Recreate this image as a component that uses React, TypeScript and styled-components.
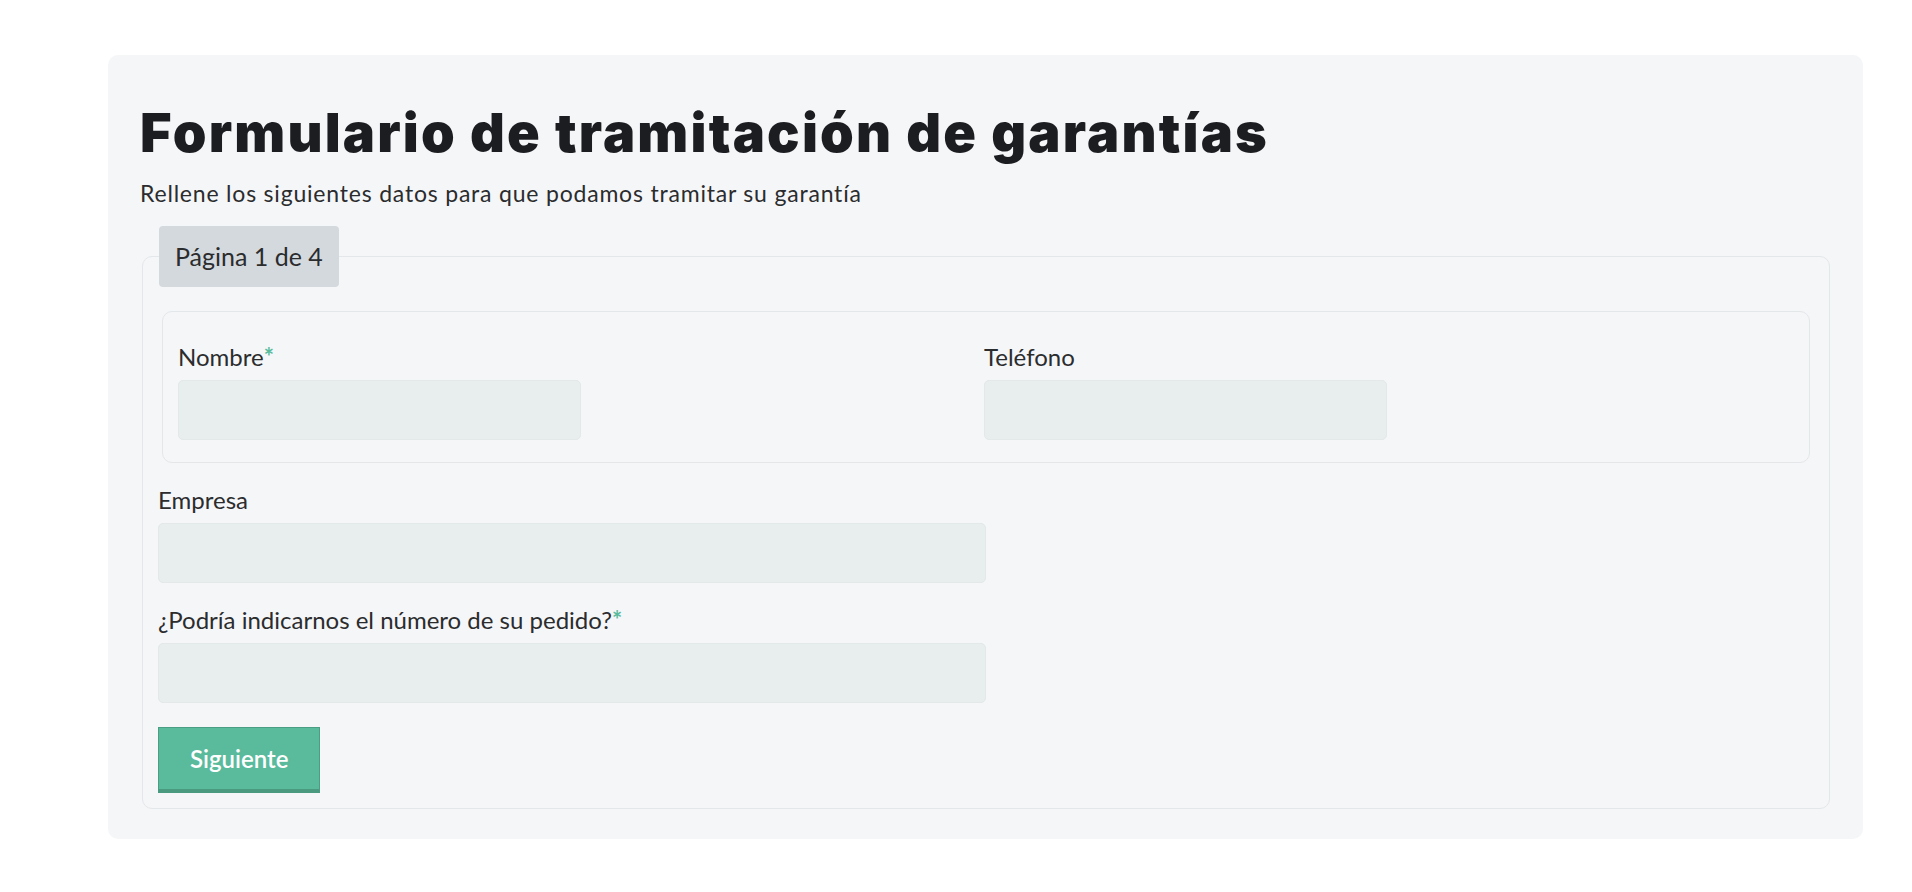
import React from "react";
import styled, { createGlobalStyle } from "styled-components";

const GlobalStyle = createGlobalStyle`
  body {
    margin: 0;
    background: #ffffff;
    font-family: Lato, "Noto Sans", sans-serif;
    color: #2b2c2e;
  }
  * {
    box-sizing: border-box;
  }
`;

const Page = styled.main`
  padding: 55px 49px 55px 108px;
`;

const Card = styled.section`
  background: #f5f6f8;
  border-radius: 10px;
  padding: 45px 31px 30px 32px;
`;

const Title = styled.h1`
  margin: 0;
  font-family: Inter, "Noto Sans", sans-serif;
  font-weight: 900;
  font-size: 54px;
  line-height: 65px;
  letter-spacing: 2.2px;
  color: #1c1d21;
`;

const Subtitle = styled.p`
  margin: 13px 0 17px;
  font-size: 23px;
  line-height: 31px;
  letter-spacing: 0.8px;
`;

const Fieldset = styled.fieldset`
  margin: 0 2px;
  padding: 24px 15px 15px;
  border: 1px solid #e4e7ea;
  border-radius: 10px;
`;

const Legend = styled.legend`
  margin-left: 1px;
  padding: 0 16px;
  height: 61px;
  line-height: 61px;
  font-size: 25px;
  background: #d4d9dd;
  border-radius: 4px;
  color: #2b2c2e;
`;

const Group = styled.div`
  display: grid;
  grid-template-columns: 1fr 1fr;
  margin: 0 4px;
  padding: 27px 19px 22px 15px;
  border: 1px solid #e4e7ea;
  border-radius: 10px;
`;

const Field = styled.div<{ $spaced?: boolean }>`
  display: flex;
  flex-direction: column;
  align-items: flex-start;
  margin-top: ${(p) => (p.$spaced ? "19px" : "0")};
`;

const Label = styled.label`
  font-size: 24px;
  line-height: 36px;
  color: #2b2c2e;
`;

const Required = styled.span`
  color: #58bb9c;
  font-weight: 700;
`;

const Input = styled.input`
  margin-top: 5px;
  width: 50%;
  height: 60px;
  background: #e8eded;
  border: 1px solid #e3e8e8;
  border-radius: 5px;
  font-size: 22px;
  padding: 0 14px;
  outline: none;
`;

const Button = styled.button`
  margin-top: 24px;
  height: 66px;
  padding: 0 31px;
  background: #5aba9c;
  border: 1px solid #4a9e84;
  border-bottom: 4px solid #4a9a80;
  border-radius: 0;
  color: #ffffff;
  font-family: Lato, "Noto Sans", sans-serif;
  font-weight: 600;
  font-size: 24px;
  cursor: pointer;
`;

function FormField({
  label,
  required,
  spaced,
}: {
  label: string;
  required?: boolean;
  spaced?: boolean;
}) {
  return (
    <Field $spaced={spaced}>
      <Label>
        {label}
        {required ? <Required>*</Required> : null}
      </Label>
      <Input type="text" />
    </Field>
  );
}

export default function App() {
  return (
    <Page>
      <GlobalStyle />
      <Card>
        <Title>Formulario de tramitación de garantías</Title>
        <Subtitle>
          Rellene los siguientes datos para que podamos tramitar su garantía
        </Subtitle>
        <Fieldset>
          <Legend>Página 1 de 4</Legend>
          <Group>
            <FormField label="Nombre" required />
            <FormField label="Teléfono" />
          </Group>
          <FormField label="Empresa" spaced />
          <FormField
            label="¿Podría indicarnos el número de su pedido?"
            required
            spaced
          />
          <Button type="button">Siguiente</Button>
        </Fieldset>
      </Card>
    </Page>
  );
}
